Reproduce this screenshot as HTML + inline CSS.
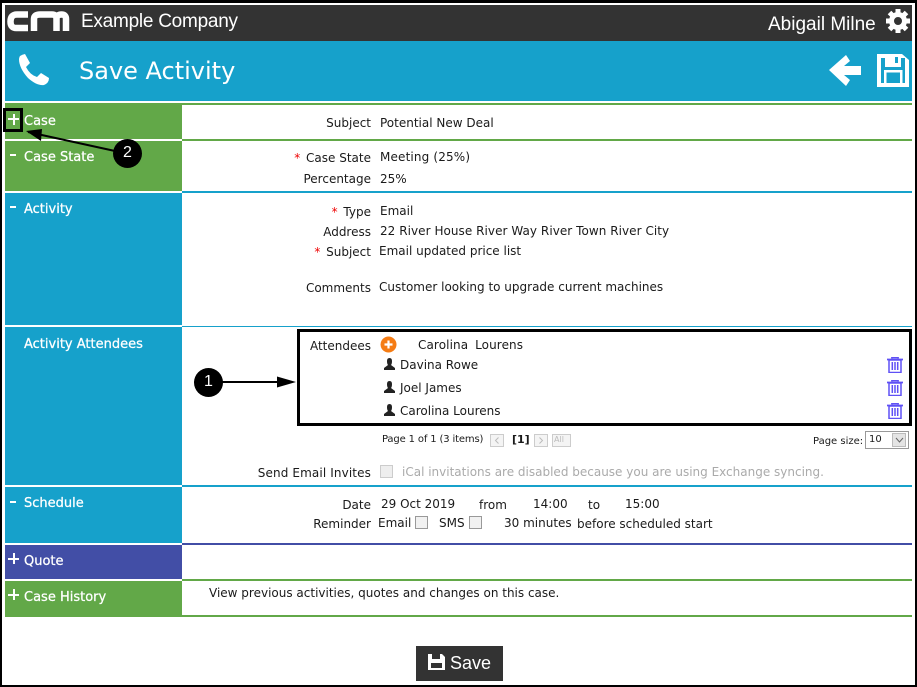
<!DOCTYPE html>
<html><head><meta charset="utf-8"><style>
html,body{margin:0;padding:0;background:#fff}
#p{position:relative;width:917px;height:687px;overflow:hidden;background:#fff;font-family:"DejaVu Sans","Liberation Sans",sans-serif;font-size:12px;color:#1a1a1a}
#p div,#p span.a,#p svg{position:absolute}
.t{position:absolute;white-space:nowrap;line-height:14px}
.r{text-align:right;width:200px}
.h{color:#fff;font-size:13px;-webkit-text-stroke:.25px #fff}
.s{color:#e00;padding-right:2px}
.g{color:#aaa}
.cb{width:11px;height:11px;border:1px solid #999;background:#f1f1f1}
</style></head><body><div id="p">
<div style="left:0;top:0;width:917px;height:3px;background:#000"></div>
<div style="left:0;top:0;width:2px;height:687px;background:#000"></div>
<div style="left:915px;top:0;width:2px;height:687px;background:#000"></div>
<div style="left:0;top:685px;width:917px;height:2px;background:#000"></div>

<div style="left:5px;top:5px;width:907px;height:36px;background:#333"></div>
<div style="left:5px;top:41px;width:907px;height:60px;background:#16a1cb"></div>

<svg style="left:7px;top:10px" width="64" height="22" viewBox="0 0 64 22"><g fill="none" stroke="#fff" stroke-width="6.500"><path d="M21 4.500H10Q3.500 4.500 3.500 11.500T10 18H21"/><path d="M27 21V9Q27 4.500 33 4.500H38"/><path d="M38 4.500H45Q49.500 4.500 49.500 9V21M49.500 9Q49.500 4.500 54.500 4.500Q59 4.500 59 9V21"/></g></svg>
<span class="t" style="left:81px;top:11px;font:19px/22px 'Liberation Sans',sans-serif;color:#fff;letter-spacing:-.25px">Example Company</span>
<span class="t" style="left:768px;top:14px;font:19px/22px 'Liberation Sans',sans-serif;color:#fff">Abigail Milne</span>
<svg style="left:885px;top:8px" width="26" height="26" viewBox="0 0 26 26"><circle cx="13" cy="13" r="6.500" fill="none" stroke="#fff" stroke-width="5"/><g stroke="#fff" stroke-width="5"><path d="M13 1V6M13 20V25M1 13H6M20 13H25M4.500 4.500L8 8M18 18L21.500 21.500M21.500 4.500L18 8M8 18L4.500 21.500"/></g></svg>

<svg style="left:17px;top:53px" width="33" height="33" viewBox="0 0 33 33"><path d="M2 6Q2 2 8 1L13 10L9 14Q13 22 20 24L24 20L32 25Q32 30 27 32Q20 33 11 25Q2 15 2 6Z" fill="#fff"/></svg>
<span class="t" style="left:79px;top:56px;font-size:24px;line-height:30px;color:#fff">Save Activity</span>
<svg style="left:829px;top:54px" width="33" height="33" viewBox="0 0 33 33"><path d="M0 16L17 1L21 7L15 12H32V21H15L21 26L17 32Z" fill="#fff"/></svg>
<svg style="left:876px;top:54px" width="33" height="33" viewBox="0 0 33 33"><path d="M1 0H26L33 6V33H1Z" fill="#fff"/><rect x="5" y="4" width="24" height="25" fill="#16a1cb"/><rect x="9" y="0" width="16" height="13" fill="#fff"/><rect x="19" y="3" width="3" height="6" fill="#16a1cb"/><rect x="9.250" y="17.250" width="16" height="13" fill="#16a1cb" stroke="#fff" stroke-width="2.500"/></svg>

<!-- side bars -->
<div style="left:5px;top:103px;width:177px;height:36px;background:#62a848"></div>
<div style="left:5px;top:141px;width:177px;height:50px;background:#62a848"></div>
<div style="left:5px;top:193px;width:177px;height:132px;background:#16a1cb"></div>
<div style="left:5px;top:327px;width:177px;height:158px;background:#16a1cb"></div>
<div style="left:5px;top:487px;width:177px;height:56px;background:#16a1cb"></div>
<div style="left:5px;top:545px;width:177px;height:34px;background:#424ea6"></div>
<div style="left:5px;top:581px;width:177px;height:36px;background:#62a848"></div>

<!-- rules -->
<div style="left:182px;top:103px;width:730px;height:2px;background:#62a848"></div>
<div style="left:182px;top:139px;width:730px;height:2px;background:#62a848"></div>
<div style="left:182px;top:191px;width:730px;height:2px;background:#16a1cb"></div>
<div style="left:182px;top:326px;width:730px;height:1px;background:#16a1cb"></div>
<div style="left:182px;top:485px;width:730px;height:2px;background:#16a1cb"></div>
<div style="left:182px;top:543px;width:730px;height:2px;background:#424ea6"></div>
<div style="left:182px;top:579px;width:730px;height:2px;background:#62a848"></div>
<div style="left:182px;top:615px;width:730px;height:2px;background:#62a848"></div>

<!-- side labels -->
<span class="t h" style="left:24px;top:115px">Case</span>
<span class="t h" style="left:24px;top:151px">Case State</span>
<span class="t h" style="left:24px;top:203px">Activity</span>
<span class="t h" style="left:24px;top:338px">Activity Attendees</span>
<span class="t h" style="left:24px;top:497px">Schedule</span>
<span class="t h" style="left:24px;top:555px">Quote</span>
<span class="t h" style="left:24px;top:591px">Case History</span>
<div style="left:8px;top:118px;width:11px;height:2px;background:#fff"></div><div style="left:12.500px;top:114px;width:2px;height:11px;background:#fff"></div>
<div style="left:10px;top:154px;width:6px;height:2px;background:#fff"></div>
<div style="left:10px;top:206px;width:6px;height:2px;background:#fff"></div>
<div style="left:10px;top:501px;width:6px;height:2px;background:#fff"></div>
<div style="left:8px;top:558px;width:11px;height:2px;background:#fff"></div><div style="left:12.500px;top:553px;width:2px;height:11px;background:#fff"></div>
<div style="left:8px;top:594px;width:11px;height:2px;background:#fff"></div><div style="left:12.500px;top:589px;width:2px;height:11px;background:#fff"></div>

<!-- annotation 2 -->
<div style="left:3px;top:108px;width:14px;height:18px;border:3px solid #000"></div>
<svg style="left:20px;top:125px" width="110" height="30" viewBox="0 0 110 30"><path d="M8 7L95 26" stroke="#000" stroke-width="2"/><path d="M6 6L22 4L21 16Z" fill="#000"/></svg>
<div style="left:113px;top:139px;width:29px;height:29px;border-radius:50%;background:#000"></div>
<span class="t" style="left:121px;top:144px;font-size:16px;line-height:18px;color:#fff;font-family:'Liberation Sans',sans-serif;width:13px;text-align:center">2</span>

<!-- form rows -->
<span class="t r" style="left:171px;top:116px">Subject</span><span class="t" style="left:380px;top:116px">Potential New Deal</span>
<span class="t r" style="left:171px;top:151px"><span class="s">*</span> Case State</span><span class="t" style="left:380px;top:150px;letter-spacing:.15px">Meeting (25%)</span>
<span class="t r" style="left:171px;top:172px">Percentage</span><span class="t" style="left:380px;top:172px">25%</span>
<span class="t r" style="left:171px;top:205px"><span class="s">*</span> Type</span><span class="t" style="left:380px;top:204px">Email</span>
<span class="t r" style="left:171px;top:225px">Address</span><span class="t" style="left:380px;top:224px;letter-spacing:.05px">22 River House River Way River Town River City</span>
<span class="t r" style="left:171px;top:245px"><span class="s">*</span> Subject</span><span class="t" style="left:379px;top:244px">Email updated price list</span>
<span class="t r" style="left:171px;top:281px">Comments</span><span class="t" style="left:379px;top:280px">Customer looking to upgrade current machines</span>

<!-- attendees -->
<div style="left:297px;top:329px;width:609px;height:91px;border:3px solid #000"></div>
<span class="t r" style="left:171px;top:339px">Attendees</span>
<svg style="left:380px;top:336px" width="17" height="17" viewBox="0 0 17 17"><circle cx="8.500" cy="8.500" r="8" fill="#f57c14"/><path d="M8.500 4.500V12.500M4.500 8.500H12.500" stroke="#fff" stroke-width="2.200"/></svg>
<span class="t" style="left:418px;top:338px;word-spacing:3px;letter-spacing:.1px">Carolina Lourens</span>
<svg style="left:383px;top:358px" width="13" height="13" viewBox="0 0 13 13"><path d="M4 3Q4 0 6.500 0T9 3Q9 6 8 7L12 10V12H1V10L5 7Q4 6 4 3Z" fill="#222"/></svg>
<svg style="left:383px;top:381px" width="13" height="13" viewBox="0 0 13 13"><path d="M4 3Q4 0 6.500 0T9 3Q9 6 8 7L12 10V12H1V10L5 7Q4 6 4 3Z" fill="#222"/></svg>
<svg style="left:383px;top:404px" width="13" height="13" viewBox="0 0 13 13"><path d="M4 3Q4 0 6.500 0T9 3Q9 6 8 7L12 10V12H1V10L5 7Q4 6 4 3Z" fill="#222"/></svg>
<span class="t" style="left:400px;top:358px">Davina Rowe</span>
<span class="t" style="left:400px;top:381px">Joel James</span>
<span class="t" style="left:400px;top:404px">Carolina Lourens</span>
<svg style="left:887px;top:357px" width="16" height="16" viewBox="0 0 16 16"><g fill="none" stroke="#5f50f5"><path d="M0 2.500H16M5 1.500V.5H11V1.500" stroke-width="1.800"/><rect x="2" y="3" width="12" height="12.500" stroke-width="1.500"/><path d="M5.300 5V13M8 5V13M10.700 5V13" stroke-width="1.500"/></g></svg>
<svg style="left:887px;top:380px" width="16" height="16" viewBox="0 0 16 16"><g fill="none" stroke="#5f50f5"><path d="M0 2.500H16M5 1.500V.5H11V1.500" stroke-width="1.800"/><rect x="2" y="3" width="12" height="12.500" stroke-width="1.500"/><path d="M5.300 5V13M8 5V13M10.700 5V13" stroke-width="1.500"/></g></svg>
<svg style="left:887px;top:403px" width="16" height="16" viewBox="0 0 16 16"><g fill="none" stroke="#5f50f5"><path d="M0 2.500H16M5 1.500V.5H11V1.500" stroke-width="1.800"/><rect x="2" y="3" width="12" height="12.500" stroke-width="1.500"/><path d="M5.300 5V13M8 5V13M10.700 5V13" stroke-width="1.500"/></g></svg>

<!-- arrow 1 -->
<div style="left:194px;top:368px;width:29px;height:29px;border-radius:50%;background:#000"></div>
<span class="t" style="left:202px;top:373px;font-size:16px;line-height:18px;color:#fff;font-family:'Liberation Sans',sans-serif;width:13px;text-align:center">1</span>
<svg style="left:222px;top:375px" width="76" height="14" viewBox="0 0 76 14"><path d="M0 7H55" stroke="#000" stroke-width="2"/><path d="M74 7L55 1.500V12.500Z" fill="#000"/></svg>

<!-- pager -->
<span class="t" style="left:382px;top:433px;font-size:10px;letter-spacing:-.15px">Page 1 of 1 (3 items)</span>
<svg style="left:490px;top:434px" width="82" height="13" viewBox="0 0 82 13"><g fill="#f4f4f4" stroke="#ccc"><rect x=".5" y=".5" width="13" height="12"/><rect x="44.500" y=".5" width="13" height="12"/><rect x="62.500" y=".5" width="18" height="12"/></g><g fill="none" stroke="#bbb"><path d="M8.500 3.500L5.500 6.500L8.500 9.500M49.500 3.500L52.500 6.500L49.500 9.500"/></g></svg>
<span class="t" style="left:512px;top:433px;font-size:11px;font-weight:bold">[1]</span>
<span class="t" style="left:554px;top:435px;font-size:8px;line-height:10px;color:#bbb">All</span>
<span class="t" style="left:813px;top:435px;font-size:10px">Page size:</span>
<div style="left:865px;top:431px;width:42px;height:16px;border:1px solid #999;background:#fff"></div>
<span class="t" style="left:869px;top:433px;font-size:10px">10</span>
<div style="left:892px;top:433px;width:14px;height:14px;background:#e4e4e4;border:1px solid #bbb;box-sizing:border-box"></div>
<svg style="left:895px;top:437px" width="9" height="6" viewBox="0 0 9 6"><path d="M1 1L4.500 5L8 1" fill="none" stroke="#666"/></svg>

<span class="t r" style="left:171px;top:466px;letter-spacing:.12px">Send Email Invites</span>
<div class="cb" style="left:380px;top:465px;background:#eee;border-color:#ccc"></div>
<span class="t g" style="left:402px;top:465px">iCal invitations are disabled because you are using Exchange syncing.</span>

<!-- schedule -->
<span class="t r" style="left:171px;top:498px">Date</span>
<span class="t" style="left:381px;top:497px">29 Oct 2019</span>
<span class="t" style="left:479px;top:498px">from</span>
<span class="t" style="left:533px;top:497px">14:00</span>
<span class="t" style="left:588px;top:498px">to</span>
<span class="t" style="left:625px;top:497px">15:00</span>
<span class="t r" style="left:171px;top:517px">Reminder</span>
<span class="t" style="left:378px;top:516px">Email</span>
<div class="cb" style="left:415px;top:516px"></div>
<span class="t" style="left:439px;top:516px">SMS</span>
<div class="cb" style="left:469px;top:516px"></div>
<span class="t" style="left:504px;top:516px">30 minutes</span>
<span class="t" style="left:577px;top:517px">before scheduled start</span>

<span class="t" style="left:209px;top:586px">View previous activities, quotes and changes on this case.</span>

<!-- save -->
<div style="left:416px;top:646px;width:87px;height:35px;background:#333"></div>
<svg style="left:428px;top:654px" width="17" height="16" viewBox="0 0 17 16"><path d="M0 0H14L17 3V16H0Z" fill="#fff"/><rect x="4" y="0" width="8" height="5" fill="#333"/><rect x="3" y="9" width="11" height="5" fill="#333"/></svg>
<span class="t" style="left:450px;top:653px;font:18px/20px 'Liberation Sans',sans-serif;color:#fff">Save</span>
</div></body></html>
